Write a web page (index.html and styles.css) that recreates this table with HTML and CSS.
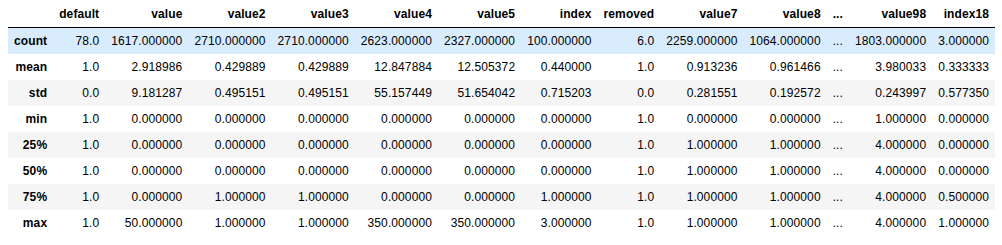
FILE: index.html
```html
<!DOCTYPE html>
<html lang="en">
<head>
  <meta charset="UTF-8">
  <title>describe()</title>
  <link rel="stylesheet" href="styles.css">
</head>
<body>

<div class="output">
  <table class="dataframe">
    <thead>
      <tr>
        <th></th>
        <th>default</th>
        <th>value</th>
        <th>value2</th>
        <th>value3</th>
        <th>value4</th>
        <th>value5</th>
        <th>index</th>
        <th>removed</th>
        <th>value7</th>
        <th>value8</th>
        <th>...</th>
        <th>value98</th>
        <th>index18</th>
      </tr>
    </thead>
    <tbody>
      <tr class="hover">
        <th>count</th><td>78.0</td><td>1617.000000</td><td>2710.000000</td><td>2710.000000</td><td>2623.000000</td><td>2327.000000</td><td>100.000000</td><td>6.0</td><td>2259.000000</td><td>1064.000000</td><td>...</td><td>1803.000000</td><td>3.000000</td>
      </tr>
      <tr>
        <th>mean</th><td>1.0</td><td>2.918986</td><td>0.429889</td><td>0.429889</td><td>12.847884</td><td>12.505372</td><td>0.440000</td><td>1.0</td><td>0.913236</td><td>0.961466</td><td>...</td><td>3.980033</td><td>0.333333</td>
      </tr>
      <tr>
        <th>std</th><td>0.0</td><td>9.181287</td><td>0.495151</td><td>0.495151</td><td>55.157449</td><td>51.654042</td><td>0.715203</td><td>0.0</td><td>0.281551</td><td>0.192572</td><td>...</td><td>0.243997</td><td>0.577350</td>
      </tr>
      <tr>
        <th>min</th><td>1.0</td><td>0.000000</td><td>0.000000</td><td>0.000000</td><td>0.000000</td><td>0.000000</td><td>0.000000</td><td>1.0</td><td>0.000000</td><td>0.000000</td><td>...</td><td>1.000000</td><td>0.000000</td>
      </tr>
      <tr>
        <th>25%</th><td>1.0</td><td>0.000000</td><td>0.000000</td><td>0.000000</td><td>0.000000</td><td>0.000000</td><td>0.000000</td><td>1.0</td><td>1.000000</td><td>1.000000</td><td>...</td><td>4.000000</td><td>0.000000</td>
      </tr>
      <tr>
        <th>50%</th><td>1.0</td><td>0.000000</td><td>0.000000</td><td>0.000000</td><td>0.000000</td><td>0.000000</td><td>0.000000</td><td>1.0</td><td>1.000000</td><td>1.000000</td><td>...</td><td>4.000000</td><td>0.000000</td>
      </tr>
      <tr>
        <th>75%</th><td>1.0</td><td>0.000000</td><td>1.000000</td><td>1.000000</td><td>0.000000</td><td>0.000000</td><td>1.000000</td><td>1.0</td><td>1.000000</td><td>1.000000</td><td>...</td><td>4.000000</td><td>0.500000</td>
      </tr>
      <tr>
        <th>max</th><td>1.0</td><td>50.000000</td><td>1.000000</td><td>1.000000</td><td>350.000000</td><td>350.000000</td><td>3.000000</td><td>1.0</td><td>1.000000</td><td>1.000000</td><td>...</td><td>4.000000</td><td>1.000000</td>
      </tr>
    </tbody>
  </table>
</div>

</body>
</html>
```

FILE: styles.css
```css
body { margin:0; background:#fff; font-family:'Liberation Sans',Arial,sans-serif; color:#000; }
.output { padding:1px 8px 0 8px; }
.dataframe { border:none; border-collapse:collapse; border-spacing:0; font-size:12px; letter-spacing:0.1px; color:#000; }
.dataframe th, .dataframe td { text-align:right; vertical-align:middle; padding:6px; line-height:14px; white-space:nowrap; border:none; }
.dataframe th { font-weight:bold; }
.dataframe thead { border-bottom:1px solid #000; }
.dataframe tbody tr:nth-child(odd) { background:#f5f5f5; }
.dataframe tbody tr.hover { background:#d9ecfd; }
```
